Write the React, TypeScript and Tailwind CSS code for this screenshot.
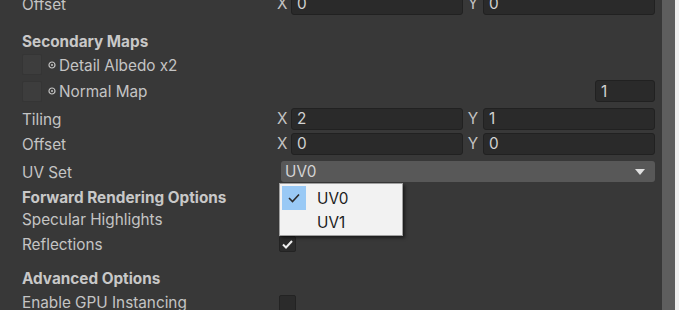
import React from "react";

const Field = ({ v, className = "" }: { v: string; className?: string }) => (
  <div
    className={
      "h-[22px] rounded-[3px] bg-[#2a2a2a] border border-[#212121] flex items-center pl-[5px] pt-[2px] text-[#d2d2d2] " +
      className
    }
  >
    {v}
  </div>
);

const Vec2 = ({ x, y }: { x: string; y: string }) => (
  <div className="flex items-center w-full">
    <div className="w-[12px] -ml-[2px] pt-[2px] text-[#c4c4c4]">X</div>
    <Field v={x} className="flex-1 ml-[2px]" />
    <div className="w-[20px] pt-[2px] text-center text-[#c4c4c4]">Y</div>
    <Field v={y} className="flex-1" />
  </div>
);

const Slot = () => (
  <div className="w-[20px] h-[21px] bg-[#3d3d3d] border border-[#353535] rounded-[2px] mr-[6px]" />
);

const Dot = () => (
  <svg width="8" height="8" viewBox="0 0 8 8" className="mr-[3px]">
    <circle cx="4" cy="4" r="3" fill="none" stroke="#c4c4c4" strokeWidth="1.2" />
    <circle cx="4" cy="4" r="1" fill="#c4c4c4" />
  </svg>
);

const Row = ({
  label,
  bold,
  h,
  children,
  lead,
}: {
  label: string;
  bold?: boolean;
  h: string;
  children?: React.ReactNode;
  lead?: React.ReactNode;
}) => (
  <div className={"flex items-center " + h}>
    <div
      className={
        "w-[257px] flex items-center whitespace-nowrap " +
        (bold ? "font-bold text-[#c8c8c8]" : "text-[#c4c4c4]")
      }
    >
      {lead}
      <span className="pt-[3px]">{label}</span>
    </div>
    <div className="flex-1 flex items-center">{children}</div>
  </div>
);

export default function App() {
  return (
    <div
      className="w-[679px] h-[310px] overflow-hidden bg-[#383838] flex text-[15.3px]"
      style={{ fontFamily: "Inter, 'Noto Sans', sans-serif" }}
    >
      <div className="relative flex-1 pl-[22px] pr-[7px]">
        <div className="flex flex-col -mt-[8px]">
          <Row label="Offset" h="h-[23px]">
            <Vec2 x="0" y="0" />
          </Row>
          <div className="h-[14px]" />
          <Row label="Secondary Maps" bold h="h-[24px]" />
          <Row
            label="Detail Albedo x2"
            h="h-[23px]"
            lead={
              <>
                <Slot />
                <Dot />
              </>
            }
          />
          <Row
            label="Normal Map"
            h="h-[30px]"
            lead={
              <>
                <Slot />
                <Dot />
              </>
            }
          >
            <div className="flex-1" />
            <Field v="1" className="w-[60px]" />
          </Row>
          <Row label="Tiling" h="h-[25px]">
            <Vec2 x="2" y="1" />
          </Row>
          <Row label="Offset" h="h-[25px]">
            <Vec2 x="0" y="0" />
          </Row>
          <Row label="UV Set" h="h-[31px]">
            <div className="ml-[2px] w-full h-[21px] rounded-[3px] bg-[#585858] flex items-center pl-[4px] pr-[10px] text-[#d4d4d4]">
              <span className="flex-1 pt-[2px]">UV0</span>
              <svg width="10" height="6" viewBox="0 0 10 6">
                <path d="M0 0 L10 0 L5 6 Z" fill="#e0e0e0" />
              </svg>
            </div>
          </Row>
          <Row label="Forward Rendering Options" bold h="h-[20px]" />
          <Row label="Specular Highlights" h="h-[24px]" />
          <Row label="Reflections" h="h-[26px]">
            <div className="w-[17px] h-[16px] rounded-[2px] bg-[#2b2b2b] border border-[#232323] flex items-center justify-center">
              <svg width="11" height="9" viewBox="0 0 11 9">
                <path d="M1 4.5 L4 7.5 L10 1" fill="none" stroke="#f0f0f0" strokeWidth="2" />
              </svg>
            </div>
          </Row>
          <div className="h-[9px]" />
          <Row label="Advanced Options" bold h="h-[24px]" />
          <Row label="Enable GPU Instancing" h="h-[24px]">
            <div className="w-[17px] h-[17px] mt-[3px] rounded-[2px] bg-[#2b2b2b] border border-[#232323]" />
          </Row>
        </div>

        <div className="absolute left-[279px] top-[183px] w-[124px] h-[53px] bg-[#f2f2f2] border border-[#a0a0a0] shadow-[2px_2px_3px_rgba(0,0,0,0.5)] flex flex-col pt-[2px] pl-[2px]">
          <div className="flex items-center h-[24px]">
            <div className="w-[24px] h-[24px] bg-[#99c9f5] flex items-center justify-center">
              <svg width="12" height="10" viewBox="0 0 12 10">
                <path d="M1 5 L4.5 8.5 L11 1.5" fill="none" stroke="#2b2b2b" strokeWidth="1.6" />
              </svg>
            </div>
            <span className="ml-[11px] pt-[2px] text-[#1c1c1c]">UV0</span>
          </div>
          <div className="flex items-center h-[25px]">
            <div className="w-[24px]" />
            <span className="ml-[11px] pt-[2px] text-[#1c1c1c]">UV1</span>
          </div>
        </div>
      </div>
      <div className="w-[13px] bg-[#5e5e5e]" />
      <div className="w-[4px] bg-[#f0f0f0]" />
    </div>
  );
}
